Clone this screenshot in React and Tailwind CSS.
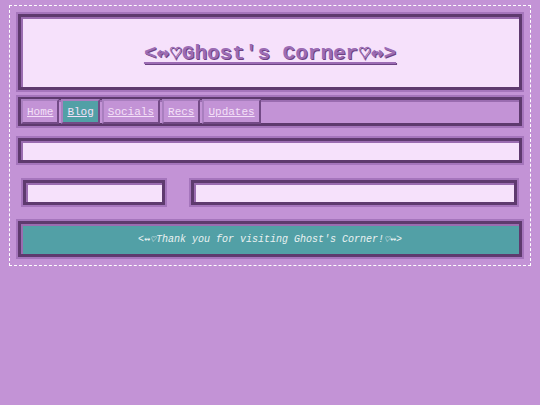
import React from "react";

const box = "border-[3px] border-[#5e3a6e] shadow-[0_0_0_2px_#a575bc,inset_2px_2px_0_#9a6cb0]";

export default function App() {
  const links = ["Home", "Blog", "Socials", "Recs", "Updates"];
  return (
    <div className="min-h-[405px] w-[540px] bg-[#c393d6] pt-[5px] px-[9px] [font-family:'Courier_New','Nimbus_Mono_PS','FreeMono','Liberation_Mono',monospace]">
      <div className="w-[522px] border border-dashed border-white flex flex-col px-[8px] pt-[8px] pb-[8px]">
        <div className={`h-[76px] pt-[3px] bg-[#f6e1fb] flex items-center justify-center ${box}`}>
          <span className="text-[21px] font-bold text-[#9c6cb4] underline underline-offset-[3px] decoration-[2px] [text-shadow:1px_1px_0_#6c4282]">
            &lt;↭♡Ghost's Corner♡↭&gt;
          </span>
        </div>
        <div className={`mt-[7px] h-[29px] flex items-center gap-[2px] bg-[#c393d6] ${box}`}>
          {links.map((l) => (
            <a
              key={l}
              className={`h-[25px] flex items-center px-[4px] pt-[1px] text-[11px] text-[#f4e0f8] underline border-2 border-t-[#a97fbf] border-l-[#a97fbf] border-r-[#734a86] border-b-[#734a86] ${
                l === "Blog" ? "bg-[#52a0a6]" : "bg-[#c393d6]"
              }`}
            >
              {l}
            </a>
          ))}
        </div>
        <div className={`mt-[12px] h-[25px] bg-[#f6e1fb] ${box}`}></div>
        <div className="mt-[17px] flex px-[5px] gap-[26px]">
          <div className={`w-[142px] h-[25px] bg-[#f6e1fb] ${box}`}></div>
          <div className={`flex-1 h-[25px] bg-[#f6e1fb] ${box}`}></div>
        </div>
        <div className={`mt-[16px] h-[36px] bg-[#52a0a6] flex items-center justify-center ${box}`}>
          <span className="text-[10px] italic text-[#eaf2f2]">
            &lt;↭♡Thank you for visiting Ghost's Corner!♡↭&gt;
          </span>
        </div>
      </div>
    </div>
  );
}
